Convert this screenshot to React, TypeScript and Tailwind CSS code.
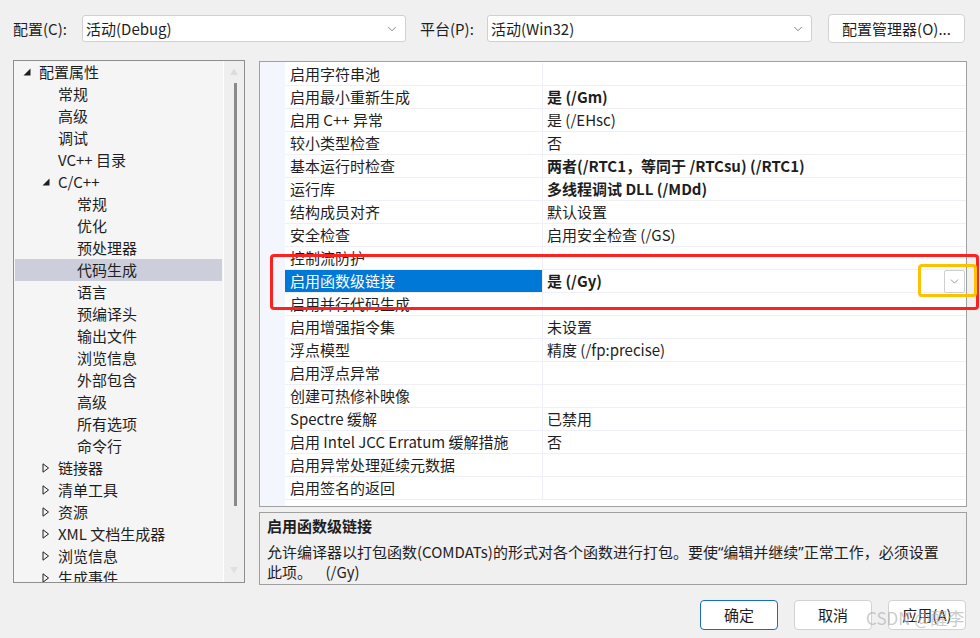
import React from "react";
import { ChevronDown } from "lucide-react";

type TreeItem = { label: string; level: number; state?: "open" | "closed"; selected?: boolean };

const tree: TreeItem[] = [
  { label: "配置属性", level: 0, state: "open" },
  { label: "常规", level: 1 },
  { label: "高级", level: 1 },
  { label: "调试", level: 1 },
  { label: "VC++ 目录", level: 1 },
  { label: "C/C++", level: 1, state: "open" },
  { label: "常规", level: 2 },
  { label: "优化", level: 2 },
  { label: "预处理器", level: 2 },
  { label: "代码生成", level: 2, selected: true },
  { label: "语言", level: 2 },
  { label: "预编译头", level: 2 },
  { label: "输出文件", level: 2 },
  { label: "浏览信息", level: 2 },
  { label: "外部包含", level: 2 },
  { label: "高级", level: 2 },
  { label: "所有选项", level: 2 },
  { label: "命令行", level: 2 },
  { label: "链接器", level: 1, state: "closed" },
  { label: "清单工具", level: 1, state: "closed" },
  { label: "资源", level: 1, state: "closed" },
  { label: "XML 文档生成器", level: 1, state: "closed" },
  { label: "浏览信息", level: 1, state: "closed" },
  { label: "生成事件", level: 1, state: "closed" },
];

type Prop = { name: string; value?: string; bold?: boolean; selected?: boolean };

const props: Prop[] = [
  { name: "启用字符串池" },
  { name: "启用最小重新生成", value: "是 (/Gm)", bold: true },
  { name: "启用 C++ 异常", value: "是 (/EHsc)" },
  { name: "较小类型检查", value: "否" },
  { name: "基本运行时检查", value: "两者(/RTC1，等同于 /RTCsu) (/RTC1)", bold: true },
  { name: "运行库", value: "多线程调试 DLL (/MDd)", bold: true },
  { name: "结构成员对齐", value: "默认设置" },
  { name: "安全检查", value: "启用安全检查 (/GS)" },
  { name: "控制流防护" },
  { name: "启用函数级链接", value: "是 (/Gy)", bold: true, selected: true },
  { name: "启用并行代码生成" },
  { name: "启用增强指令集", value: "未设置" },
  { name: "浮点模型", value: "精度 (/fp:precise)" },
  { name: "启用浮点异常" },
  { name: "创建可热修补映像" },
  { name: "Spectre 缓解", value: "已禁用" },
  { name: "启用 Intel JCC Erratum 缓解措施", value: "否" },
  { name: "启用异常处理延续元数据" },
  { name: "启用签名的返回" },
];

function Arrow({ state }: { state?: "open" | "closed" }) {
  if (state === "open")
    return (
      <svg width="8" height="8" viewBox="0 0 8 8">
        <polygon points="7.5,0.5 7.5,7.5 0.5,7.5" fill="#1e1e1e" />
      </svg>
    );
  if (state === "closed")
    return (
      <svg width="8" height="10" viewBox="0 0 8 10">
        <polygon points="1,0.8 6.5,5 1,9.2" fill="none" stroke="#1e1e1e" strokeWidth="1" />
      </svg>
    );
  return null;
}

function Combo({ text, width }: { text: string; width: string }) {
  return (
    <div
      className={`${width} h-[27px] bg-white border border-[#d0d0d0] rounded-[3px] flex items-center pl-[3px] pr-[6px] justify-between`}
    >
      <span className="pb-px">{text}</span>
      <ChevronDown size={14} strokeWidth={1.2} color="#555" />
    </div>
  );
}

function Btn({ label, primary }: { label: string; primary?: boolean }) {
  return (
    <div
      className={`w-[78px] h-[30px] rounded-[4px] bg-white flex items-center justify-center pb-px border ${
        primary ? "border-[#1a6cc0]" : "border-[#d2d2d2]"
      }`}
    >
      {label}
    </div>
  );
}

export default function App() {
  return (
    <div
      className="relative w-[980px] h-[638px] overflow-hidden bg-[#f0f0f0] text-[15px] text-[#1e1e1e] leading-none"
      style={{ fontFamily: '"Noto Sans CJK SC", "Noto Sans", sans-serif' }}
    >
      {/* top bar */}
      <div className="flex items-center h-[29px] mt-[14px] pl-[13px]">
        <span className="w-[69px] pb-px">配置(C):</span>
        <Combo text="活动(Debug)" width="w-[324px]" />
        <span className="ml-[14px] w-[67px] pb-px">平台(P):</span>
        <Combo text="活动(Win32)" width="w-[325px]" />
        <div className="ml-[16px] w-[137px] h-[29px] bg-white border border-[#d2d2d2] rounded-[4px] flex items-center justify-center pb-px">
          配置管理器(O)...
        </div>
      </div>

      {/* main */}
      <div className="flex mt-[17px] pl-[13px] gap-[14px]">
        {/* tree */}
        <div className="w-[232px] h-[523px] border border-[#8e8e8e] bg-[#f5f5f5] flex overflow-hidden">
          <div className="flex-1 flex flex-col px-px">
            {tree.map((t, i) => (
              <div
                key={i}
                className={`h-[22px] shrink-0 flex items-center ${t.selected ? "bg-[#cccedb]" : ""}`}
              >
                <div style={{ width: 8 + 19 * t.level }} className="shrink-0" />
                <div className="w-[16px] shrink-0 flex items-center">
                  <Arrow state={t.state} />
                </div>
                <span className="whitespace-nowrap pb-[2px]">{t.label}</span>
              </div>
            ))}
          </div>
          <div className="w-[21px] border-l border-white bg-[#efefef] flex flex-col items-center">
            <div className="mt-[7px] text-[8px] text-[#dcdcdc]">▲</div>
            <div className="mt-[7px] w-[3px] h-[423px] bg-[#8a8a8a] ml-[2px]" />
            <div className="mt-auto mb-[8px] text-[8px] text-[#e0e0e0]">▼</div>
          </div>
        </div>

        {/* right column */}
        <div className="w-[708px] pt-px flex flex-col gap-[5px]">
          <div className="h-[446px] border border-[#a0a0a0] flex overflow-hidden">
            <div className="w-[25px] bg-[#f3f6fc] shrink-0" />
            <div className="flex-1 bg-white flex flex-col pt-px">
              {props.map((p, i) => (
                <div key={i} className="h-[23px] shrink-0 flex border-b border-[#eff0f7]">
                  <div
                    className={`w-[258px] shrink-0 flex items-center pl-[5px] pb-[2px] border-r border-[#eff0f7] whitespace-nowrap ${
                      p.selected ? "bg-[#0078d7] text-white" : ""
                    }`}
                  >
                    {p.name}
                  </div>
                  <div
                    className={`flex-1 flex items-center pl-[4px] pr-[1px] whitespace-nowrap ${
                      p.bold ? "font-bold" : ""
                    }`}
                  >
                    <span className="flex-1 pb-[2px]">{p.value}</span>
                    {p.selected && (
                      <div className="w-[21px] h-[23px] bg-white border border-[#cfcfcf] rounded-[2px] flex items-center justify-center">
                        <ChevronDown size={13} strokeWidth={1.1} color="#555" />
                      </div>
                    )}
                  </div>
                </div>
              ))}
            </div>
          </div>

          <div className="h-[73px] border border-[#a0a0a0] bg-[#f0f0f0] px-[7px] pt-[5px]">
            <div className="font-bold h-[14px] flex items-center">启用函数级链接</div>
            <div className="mt-[9px] h-[20px] flex items-center whitespace-nowrap">
              允许编译器以打包函数(COMDATs)的形式对各个函数进行打包。要使
              <span style={{ fontFamily: '"Noto Sans", sans-serif' }}>“</span>编辑并继续
              <span style={{ fontFamily: '"Noto Sans", sans-serif' }}>”</span>正常工作，必须设置
            </div>
            <div className="h-[20px] flex items-center whitespace-pre">此项。    (/Gy)</div>
          </div>
        </div>
      </div>

      {/* buttons */}
      <div className="flex justify-end gap-[16px] pr-[14px] mt-[15px]">
        <Btn label="确定" primary />
        <Btn label="取消" />
        <Btn label="应用(A)" />
      </div>

      {/* annotations */}
      <div className="absolute left-[270px] top-[254px] w-[709px] h-[56px] border-[3px] border-[#ff2020] rounded-[4px]" />
      <div className="absolute left-[918px] top-[264px] w-[59px] h-[33px] border-[3px] border-[#ffc000] rounded-[4px]" />
      <div className="absolute left-[866px] top-[609px] text-[17px] text-[#b4b4b4]/70 whitespace-nowrap">
        CSDN @醒李
      </div>
    </div>
  );
}
